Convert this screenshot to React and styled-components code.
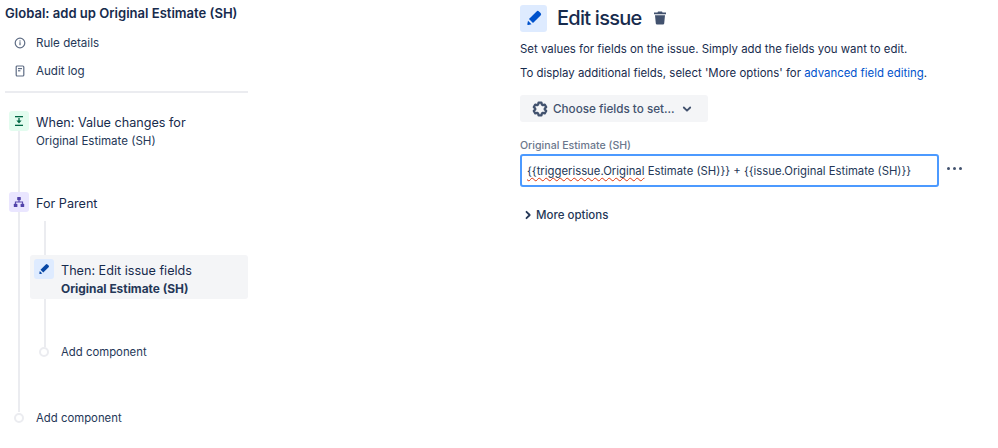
import React from 'react';
import styled, { createGlobalStyle } from 'styled-components';

const GlobalStyle = createGlobalStyle`
  html, body { margin: 0; padding: 0; background: #fff; }
  body { font-family: Inter, "Noto Sans", "Liberation Sans", sans-serif; color: #172b4d; }
`;

const Page = styled.div`
  width: 998px;
  height: 448px;
  overflow: hidden;
  display: flex;
  align-items: flex-start;
`;

const Sidebar = styled.aside`
  width: 243px;
  margin-left: 5px;
  flex: none;
`;

const RuleTitle = styled.h1`
  margin: 4px 0 0;
  font-size: 13.05px;
  line-height: 18px;
  font-weight: 600;
  color: #172b4d;
  white-space: nowrap;
`;

const NavList = styled.nav`
  display: flex;
  flex-direction: column;
  gap: 10px;
  margin-top: 12px;
  padding: 0 0 11px 9px;
  border-bottom: 2px solid #ebecf0;
`;

const NavItem = styled.div`
  display: flex;
  align-items: center;
  gap: 10px;
  height: 18px;
  font-size: 11.6px;
  color: #253858;
  svg { flex: none; color: #5e6c84; }
`;

const Flow = styled.div`
  position: relative;
  margin-top: 18px;
  padding-left: 4px;
  &::before {
    content: '';
    position: absolute;
    left: 13px;
    top: 10px;
    height: 291px;
    width: 2px;
    background: #ebecf0;
  }
`;

const StepRow = styled.div`
  position: relative;
  display: flex;
  align-items: flex-start;
  gap: 7px;
  min-height: ${p => p.$height}px;
`;

const StepIcon = styled.span`
  width: ${p => p.$size || 20}px;
  height: ${p => p.$size || 20}px;
  flex: none;
  border-radius: 3px;
  display: flex;
  align-items: center;
  justify-content: center;
  background: ${p => p.$bg};
  color: ${p => p.$fg};
`;

const StepText = styled.div`
  display: flex;
  flex-direction: column;
  padding-top: 3px;
`;

const StepName = styled.span`
  font-size: 12.64px;
  line-height: 18px;
  white-space: nowrap;
`;

const StepDetail = styled.span`
  font-size: ${p => (p.$bold ? 11.9 : 11.55)}px;
  line-height: 18px;
  font-weight: ${p => (p.$bold ? 700 : 400)};
  color: #253858;
  white-space: nowrap;
`;

const Branch = styled.div`
  position: relative;
  margin: 8px 0 0 21px;
  padding-top: 34px;
  &::before {
    content: '';
    position: absolute;
    left: 14px;
    top: 0;
    height: 126px;
    width: 2px;
    background: #ebecf0;
  }
`;

const SelectedStep = styled.div`
  position: relative;
  display: flex;
  align-items: flex-start;
  gap: 7px;
  height: 44px;
  box-sizing: border-box;
  padding: 4px 0 0 4px;
  background: #f4f5f7;
  border-radius: 3px;
`;

const AddRow = styled.div`
  position: relative;
  display: flex;
  align-items: center;
  gap: ${p => p.$gap}px;
  height: 18px;
  margin-top: ${p => p.$top}px;
  padding-left: ${p => p.$indent}px;
  font-size: 11.35px;
  color: #253858;
`;

const AddDot = styled.span`
  width: 10px;
  height: 10px;
  flex: none;
  box-sizing: border-box;
  border-radius: 50%;
  background: #fff;
  border: 2px solid #ebecf0;
`;

const Editor = styled.main`
  width: 460px;
  margin-left: 272px;
  flex: none;
`;

const EditorHeader = styled.header`
  display: flex;
  align-items: center;
  height: 28px;
  margin-top: 4px;
`;

const EditorTitle = styled.h2`
  margin: 0 0 0 10px;
  font-size: 20px;
  line-height: 28px;
  letter-spacing: -0.75px;
  font-weight: 500;
  color: #172b4d;
`;

const TrashButton = styled.span`
  display: flex;
  margin-left: 11px;
  color: #42526e;
`;

const HelpText = styled.p`
  margin: ${p => p.$top}px 0 0;
  font-size: 11.42px;
  line-height: 16px;
  color: #172b4d;
  white-space: nowrap;
`;

const HelpLink = styled.a`
  color: #0052cc;
  text-decoration: none;
`;

const FieldsButton = styled.button`
  display: flex;
  align-items: center;
  width: 188px;
  height: 27px;
  margin-top: 14px;
  padding: 0 0 0 12px;
  border: 0;
  border-radius: 3px;
  background: #f4f5f7;
  color: #42526e;
  font: 500 11.7px Inter, "Noto Sans", sans-serif;
  white-space: nowrap;
  svg:first-child { margin-right: 5px; }
  svg:last-child { margin-left: 7px; }
`;

const FieldLabel = styled.label`
  display: block;
  margin-top: 17px;
  font-size: 10.6px;
  line-height: 14px;
  font-weight: 500;
  color: #6b778c;
`;

const FieldRow = styled.div`
  display: flex;
  align-items: center;
  margin-top: 1px;
`;

const FieldInput = styled.div`
  width: 419px;
  height: 33px;
  flex: none;
  box-sizing: border-box;
  display: flex;
  align-items: center;
  padding: 1px 0 0 5px;
  border: 2px solid #4c9aff;
  border-radius: 3px;
  font-size: 11.32px;
  color: #253858;
  white-space: nowrap;
`;

const SpellError = styled.span`
  text-decoration: underline wavy #de350b 1px;
  text-underline-offset: 2px;
`;

const MoreDots = styled.span`
  display: flex;
  gap: 3px;
  margin: -4px 0 0 8px;
  i { width: 3px; height: 3px; border-radius: 50%; background: #42526e; }
`;

const MoreOptions = styled.div`
  display: flex;
  align-items: center;
  gap: 3px;
  margin-top: 19px;
  padding-left: 3px;
  font-size: 11.5px;
  line-height: 18px;
  font-weight: 500;
  color: #253858;
`;

const Pencil = ({ size }) => (
  <svg width={size} height={size} viewBox="0 0 24 24" fill="currentColor">
    <path d="M4.02 19.23a1 1 0 0 0 1.18 1.18l3.81-.78-4.21-4.21-.78 3.81zM19.92 6.08l-2-2a2 2 0 0 0-2.83 0l-9.1 9.13 4.8 4.8 9.13-9.1a2 2 0 0 0 0-2.83z" />
  </svg>
);

const InfoIcon = () => (
  <svg width="12" height="12" viewBox="0 0 12 12" fill="none">
    <circle cx="6" cy="6" r="4.8" stroke="currentColor" strokeWidth="1.2" />
    <rect x="5.4" y="5.2" width="1.2" height="3" fill="currentColor" />
    <rect x="5.4" y="3.4" width="1.2" height="1.2" fill="currentColor" />
  </svg>
);

const LogIcon = () => (
  <svg width="12" height="12" viewBox="0 0 12 12" fill="none">
    <rect x="2.2" y="1" width="7.6" height="10" rx="1" stroke="currentColor" strokeWidth="1.2" />
    <rect x="4" y="3" width="4" height="1.2" fill="currentColor" />
    <rect x="4" y="5.2" width="2.4" height="1.2" fill="currentColor" />
  </svg>
);

const TriggerIcon = () => (
  <svg width="12" height="12" viewBox="0 0 12 12" fill="currentColor">
    <rect x="2" y="1" width="8" height="1.3" />
    <rect x="2" y="9.7" width="8" height="1.3" />
    <rect x="5.35" y="3" width="1.3" height="4" />
    <path d="M3.4 5.6h5.2L6 8.6z" />
  </svg>
);

const HierarchyIcon = () => (
  <svg width="12" height="12" viewBox="0 0 12 12" fill="currentColor">
    <rect x="4.2" y="1" width="3.6" height="3.2" rx="0.6" />
    <rect x="0.8" y="7.8" width="3.6" height="3.2" rx="0.6" />
    <rect x="7.6" y="7.8" width="3.6" height="3.2" rx="0.6" />
    <path d="M5.5 4h1v1.6h3.6V8h-1V6.6H2.9V8h-1V5.6h3.6z" />
  </svg>
);

const TrashIcon = () => (
  <svg width="16" height="16" viewBox="0 0 16 16" fill="currentColor">
    <path d="M6 1.6h4l.5 1H14v1.7H2V2.600h3.500z" />
    <path d="M3 5.300h10l-.8 8.200a1.200 1.200 0 0 1-1.200 1H5a1.200 1.200 0 0 1-1.200-1z" />
  </svg>
);

const GearIcon = () => (
  <svg width="16" height="16" viewBox="0 0 24 24" fill="none" stroke="currentColor" strokeWidth="3.4" strokeLinejoin="round">
    <path d="M9.800 2.500h4.400l.6 2.900 1.500.9 2.800-.9 2.200 3.800-2.200 2v1.600l2.200 2-2.200 3.800-2.800-.9-1.500.9-.6 2.900H9.800l-.6-2.900-1.500-.9-2.800.9-2.200-3.800 2.200-2v-1.600l-2.200-2 2.200-3.800 2.800.9 1.500-.9z" />
  </svg>
);

const Chevron = ({ right }) => (
  <svg width="10" height="10" viewBox="0 0 10 10" fill="none" stroke="currentColor" strokeWidth="1.800" strokeLinecap="round" strokeLinejoin="round">
    <path d={right ? 'M3.500 1.800 6.700 5 3.500 8.200' : 'M1.800 3.500 5 6.700l3.200-3.200'} />
  </svg>
);

export default function App() {
  return (
    <Page>
      <GlobalStyle />
      <Sidebar>
        <RuleTitle>Global: add up Original Estimate (SH)</RuleTitle>
        <NavList>
          <NavItem><InfoIcon />Rule details</NavItem>
          <NavItem><LogIcon />Audit log</NavItem>
        </NavList>
        <Flow>
          <StepRow $height={81}>
            <StepIcon $bg="#e3fcef" $fg="#006644"><TriggerIcon /></StepIcon>
            <StepText>
              <StepName>When: Value changes for</StepName>
              <StepDetail>Original Estimate (SH)</StepDetail>
            </StepText>
          </StepRow>
          <StepRow $height={20}>
            <StepIcon $bg="#eae6ff" $fg="#5243aa"><HierarchyIcon /></StepIcon>
            <StepText><StepName>For Parent</StepName></StepText>
          </StepRow>
          <Branch>
            <SelectedStep>
              <StepIcon $bg="#deebff" $fg="#0747a6"><Pencil size={14} /></StepIcon>
              <StepText>
                <StepName>Then: Edit issue fields</StepName>
                <StepDetail $bold>Original Estimate (SH)</StepDetail>
              </StepText>
            </SelectedStep>
            <AddRow $top={44} $indent={9} $gap={12}><AddDot />Add component</AddRow>
          </Branch>
          <AddRow $top={48} $indent={5} $gap={12}><AddDot />Add component</AddRow>
        </Flow>
      </Sidebar>
      <Editor>
        <EditorHeader>
          <StepIcon $size={27} $bg="#deebff" $fg="#0052cc"><Pencil size={20} /></StepIcon>
          <EditorTitle>Edit issue</EditorTitle>
          <TrashButton><TrashIcon /></TrashButton>
        </EditorHeader>
        <HelpText $top={9}>Set values for fields on the issue. Simply add the fields you want to edit.</HelpText>
        <HelpText $top={8}>To display additional fields, select 'More options' for <HelpLink href="#">advanced field editing</HelpLink>.</HelpText>
        <FieldsButton><GearIcon />Choose fields to set...<Chevron /></FieldsButton>
        <FieldLabel>Original Estimate (SH)</FieldLabel>
        <FieldRow>
          <FieldInput><SpellError>{'{{triggerissue.Original'}</SpellError>&nbsp;{'Estimate (SH)}} + {{issue.Original Estimate (SH)}}'}</FieldInput>
          <MoreDots><i /><i /><i /></MoreDots>
        </FieldRow>
        <MoreOptions><Chevron right />More options</MoreOptions>
      </Editor>
    </Page>
  );
}
